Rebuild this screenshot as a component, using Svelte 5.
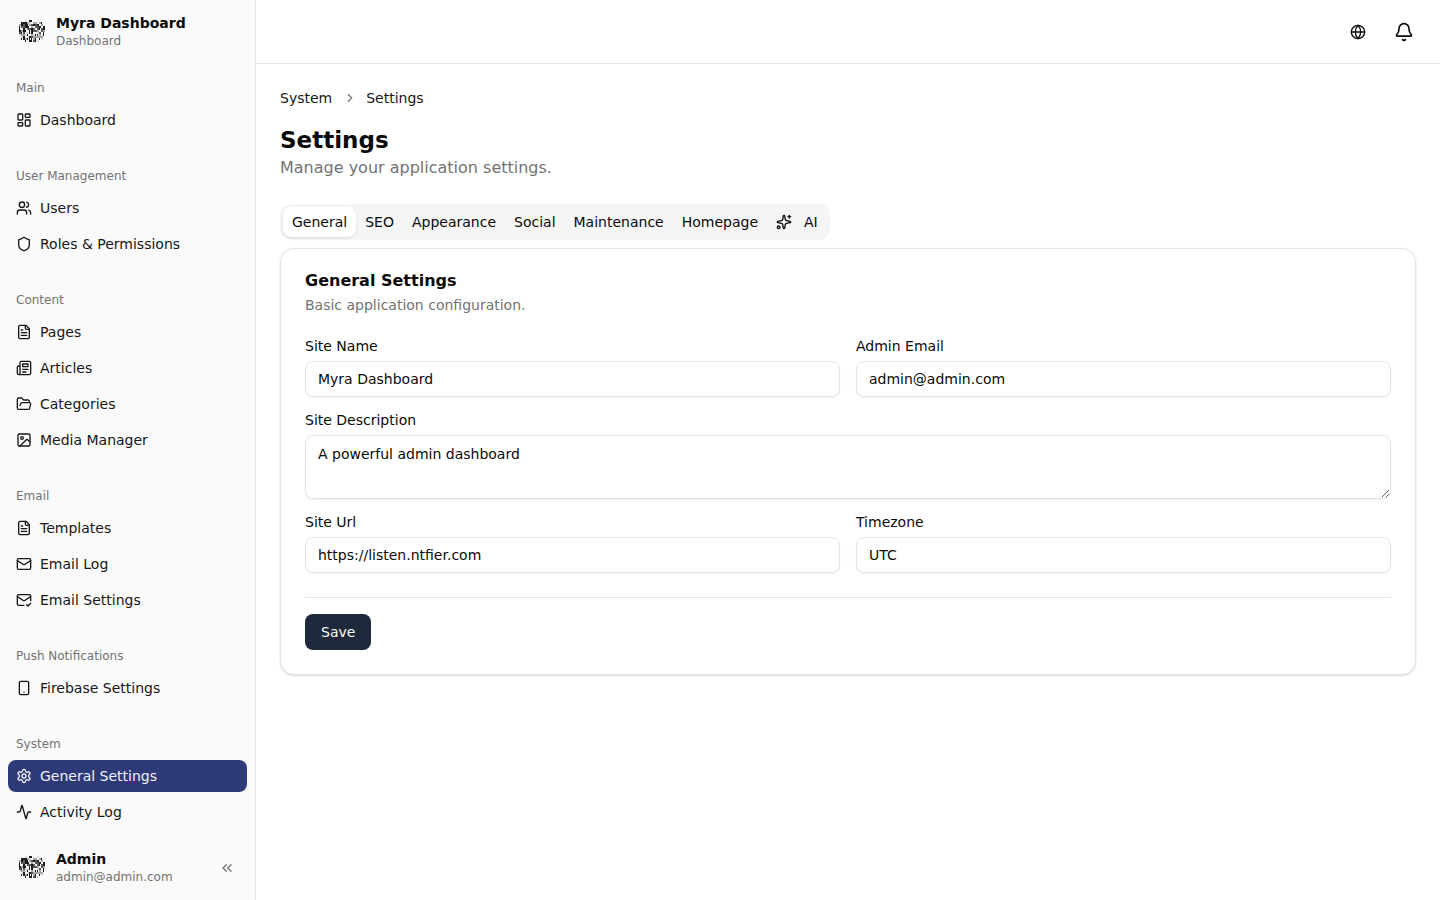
<script>
  const icons = {
    dashboard: '<rect width="7" height="9" x="3" y="3" rx="1"/><rect width="7" height="5" x="14" y="3" rx="1"/><rect width="7" height="9" x="14" y="12" rx="1"/><rect width="7" height="5" x="3" y="16" rx="1"/>',
    users: '<path d="M16 21v-2a4 4 0 0 0-4-4H6a4 4 0 0 0-4 4v2"/><circle cx="9" cy="7" r="4"/><path d="M22 21v-2a4 4 0 0 0-3-3.87"/><path d="M16 3.13a4 4 0 0 1 0 7.75"/>',
    shield: '<path d="M20 13c0 5-3.5 7.5-7.66 8.95a1 1 0 0 1-.67-.01C7.5 20.5 4 18 4 13V6a1 1 0 0 1 1-1c2 0 4.5-1.2 6.24-2.72a1.17 1.17 0 0 1 1.52 0C14.51 3.81 17 5 19 5a1 1 0 0 1 1 1z"/>',
    file: '<path d="M15 2H6a2 2 0 0 0-2 2v16a2 2 0 0 0 2 2h12a2 2 0 0 0 2-2V7Z"/><path d="M14 2v4a2 2 0 0 0 2 2h4"/><path d="M10 9H8"/><path d="M16 13H8"/><path d="M16 17H8"/>',
    news: '<path d="M4 22h16a2 2 0 0 0 2-2V4a2 2 0 0 0-2-2H8a2 2 0 0 0-2 2v16a2 2 0 0 1-2 2Zm0 0a2 2 0 0 1-2-2v-9c0-1.1.9-2 2-2h2"/><path d="M18 14h-8"/><path d="M15 18h-5"/><path d="M10 6h8v4h-8V6Z"/>',
    folder: '<path d="m6 14 1.5-2.9A2 2 0 0 1 9.24 10H20a2 2 0 0 1 1.94 2.5l-1.54 6a2 2 0 0 1-1.95 1.5H4a2 2 0 0 1-2-2V5a2 2 0 0 1 2-2h3.9a2 2 0 0 1 1.69.9l.81 1.2a2 2 0 0 0 1.67.9H18a2 2 0 0 1 2 2v2"/>',
    image: '<rect width="18" height="18" x="3" y="3" rx="2"/><circle cx="9" cy="9" r="2"/><path d="m21 15-3.086-3.086a2 2 0 0 0-2.828 0L6 21"/>',
    mail: '<rect width="20" height="16" x="2" y="4" rx="2"/><path d="m22 7-8.97 5.7a1.94 1.94 0 0 1-2.06 0L2 7"/>',
    mailcheck: '<path d="M22 13V6a2 2 0 0 0-2-2H4a2 2 0 0 0-2 2v12c0 1.1.9 2 2 2h8"/><path d="m22 7-8.97 5.7a1.94 1.94 0 0 1-2.06 0L2 7"/><path d="m16 19 2 2 4-4"/>',
    phone: '<rect width="14" height="20" x="5" y="2" rx="2"/><path d="M12 18h.01"/>',
    gear: '<path d="M12.22 2h-.44a2 2 0 0 0-2 2v.18a2 2 0 0 1-1 1.73l-.43.25a2 2 0 0 1-2 0l-.15-.08a2 2 0 0 0-2.73.73l-.22.38a2 2 0 0 0 .73 2.73l.15.1a2 2 0 0 1 1 1.72v.51a2 2 0 0 1-1 1.74l-.15.09a2 2 0 0 0-.73 2.73l.22.38a2 2 0 0 0 2.73.73l.15-.08a2 2 0 0 1 2 0l.43.25a2 2 0 0 1 1 1.73V20a2 2 0 0 0 2 2h.44a2 2 0 0 0 2-2v-.18a2 2 0 0 1 1-1.73l.43-.25a2 2 0 0 1 2 0l.15.08a2 2 0 0 0 2.73-.73l.22-.39a2 2 0 0 0-.73-2.73l-.15-.08a2 2 0 0 1-1-1.74v-.5a2 2 0 0 1 1-1.74l.15-.09a2 2 0 0 0 .73-2.73l-.22-.38a2 2 0 0 0-2.73-.73l-.15.08a2 2 0 0 1-2 0l-.43-.25a2 2 0 0 1-1-1.73V4a2 2 0 0 0-2-2z"/><circle cx="12" cy="12" r="3"/>',
    activity: '<path d="M22 12h-2.48a2 2 0 0 0-1.93 1.46l-2.35 8.36a.25.25 0 0 1-.48 0L9.24 2.18a.25.25 0 0 0-.48 0l-2.35 8.36A2 2 0 0 1 4.49 12H2"/>',
    chevrons: '<path d="m11 17-5-5 5-5"/><path d="m18 17-5-5 5-5"/>',
    chevron: '<path d="m9 18 6-6-6-6"/>',
    globe: '<circle cx="12" cy="12" r="10"/><path d="M12 2a14.5 14.5 0 0 0 0 20 14.5 14.5 0 0 0 0-20"/><path d="M2 12h20"/>',
    bell: '<path d="M10.268 21a2 2 0 0 0 3.464 0"/><path d="M3.262 15.326A1 1 0 0 0 4 17h16a1 1 0 0 0 .74-1.673C19.41 13.956 18 12.499 18 8A6 6 0 0 0 6 8c0 4.499-1.411 5.956-2.738 7.326"/>',
    sparkles: '<path d="M11.017 2.814a1 1 0 0 1 1.966 0l1.051 5.558a2 2 0 0 0 1.594 1.594l5.558 1.051a1 1 0 0 1 0 1.966l-5.558 1.051a2 2 0 0 0-1.594 1.594l-1.051 5.558a1 1 0 0 1-1.966 0l-1.051-5.558a2 2 0 0 0-1.594-1.594l-5.558-1.051a1 1 0 0 1 0-1.966l5.558-1.051a2 2 0 0 0 1.594-1.594z"/><path d="M20 2v4"/><path d="M22 4h-4"/><circle cx="4" cy="20" r="2"/>'
  };

  const groups = [
    { label: 'Main', items: [['Dashboard', 'dashboard']] },
    { label: 'User Management', items: [['Users', 'users'], ['Roles & Permissions', 'shield']] },
    { label: 'Content', items: [['Pages', 'file'], ['Articles', 'news'], ['Categories', 'folder'], ['Media Manager', 'image']] },
    { label: 'Email', items: [['Templates', 'file'], ['Email Log', 'mail'], ['Email Settings', 'mailcheck']] },
    { label: 'Push Notifications', items: [['Firebase Settings', 'phone']] },
    { label: 'System', items: [['General Settings', 'gear'], ['Activity Log', 'activity']] }
  ];

  const tabs = ['General', 'SEO', 'Appearance', 'Social', 'Maintenance', 'Homepage'];

  // speckled cube logo: chunky deterministic noise inside a chamfered block outline
  const cells = [];
  let seed = 11;
  for (let y = 4; y < 26; y += 2) {
    for (let x = 3; x < 29; x += 2) {
      const dy = Math.abs(y - 14);
      const inset = dy >= 10 ? 6 : dy >= 8 ? 2 : 0;
      if (x < 3 + inset || x > 27 - inset) continue;
      seed = (seed * 16807) % 2147483647;
      const r = (seed % 100) / 100;
      const shade = r < 0.36 ? '#1c1c1c' : r < 0.52 ? '#5a5a5a' : r < 0.72 ? '#a6a6a6' : r < 0.86 ? '#dcdcdc' : null;
      if (shade) cells.push({ x, y, shade, w: r < 0.2 ? 1 : 2 });
    }
  }
</script>

{#snippet icon(name, size = 16)}
  <svg class="icon" width={size} height={size} viewBox="0 0 24 24" fill="none" stroke="currentColor" stroke-width="2" stroke-linecap="round" stroke-linejoin="round">{@html icons[name]}</svg>
{/snippet}

{#snippet logo()}
  <svg class="logo" width="32" height="32" viewBox="0 0 32 32">
    {#each cells as c}
      <rect x={c.x} y={c.y} width={c.w} height="2" fill={c.shade} />
    {/each}
  </svg>
{/snippet}

<div class="app">
  <aside class="sidebar">
    <div class="brand">
      {@render logo()}
      <div class="who">
        <strong>Myra Dashboard</strong>
        <span>Dashboard</span>
      </div>
    </div>
    <nav class="groups">
      {#each groups as g}
        <section class="group">
          <div class="group-label">{g.label}</div>
          <ul>
            {#each g.items as [name, ic]}
              <li class:active={name === 'General Settings'}>
                {@render icon(ic)}
                <span>{name}</span>
              </li>
            {/each}
          </ul>
        </section>
      {/each}
    </nav>
    <div class="foot">
      {@render logo()}
      <div class="who">
        <strong>Admin</strong>
        <span>admin@admin.com</span>
      </div>
      <span class="collapse">{@render icon('chevrons')}</span>
    </div>
  </aside>

  <div class="main">
    <header class="topbar">
      <span class="top-icon">{@render icon('globe')}</span>
      <span class="top-icon">{@render icon('bell', 20)}</span>
    </header>
    <main class="content">
      <div class="crumbs">
        <span>System</span>
        <span class="sep">{@render icon('chevron', 14)}</span>
        <span>Settings</span>
      </div>
      <h1>Settings</h1>
      <p class="lead">Manage your application settings.</p>

      <div class="tabs">
        {#each tabs as t, i}
          <div class="tab" class:on={i === 0}>{t}</div>
        {/each}
        <div class="tab ai">{@render icon('sparkles')}<span>AI</span></div>
      </div>

      <section class="card">
        <h2>General Settings</h2>
        <p class="desc">Basic application configuration.</p>
        <div class="form">
          <label class="field"><span>Site Name</span><input value="Myra Dashboard" /></label>
          <label class="field"><span>Admin Email</span><input value="admin@admin.com" /></label>
          <label class="field wide"><span>Site Description</span><textarea>A powerful admin dashboard</textarea></label>
          <label class="field"><span>Site Url</span><input value="https://listen.ntfier.com" /></label>
          <label class="field"><span>Timezone</span><input value="UTC" /></label>
        </div>
        <hr />
        <button type="button">Save</button>
      </section>
    </main>
  </div>
</div>

<style>
  :global(body) {
    margin: 0;
    background: #fff;
    font-family: "DejaVu Sans", sans-serif;
    color: #0a0a0a;
  }
  .app {
    display: flex;
    height: 900px;
    overflow: hidden;
  }
  .sidebar {
    width: 255px;
    flex: none;
    background: #fafafa;
    border-right: 1px solid #e5e5e5;
    display: flex;
    flex-direction: column;
  }
  .brand, .foot {
    display: flex;
    align-items: center;
    gap: 8px;
    height: 48px;
    padding: 0 8px;
    margin: 8px;
  }
  .logo { flex: none; }
  .who {
    display: flex;
    flex-direction: column;
    min-width: 0;
    flex: 1;
    padding-bottom: 2px;
  }
  .who strong {
    font-size: 14px;
    line-height: 20px;
    font-weight: 600;
  }
  .who span {
    font-size: 12px;
    line-height: 16px;
    color: #737373;
  }
  .groups {
    flex: 1;
    display: flex;
    flex-direction: column;
    gap: 8px;
  }
  .group { padding: 8px; }
  .group-label {
    height: 32px;
    line-height: 32px;
    padding: 0 8px;
    font-size: 12px;
    color: #737373;
  }
  ul {
    list-style: none;
    margin: 0;
    padding: 0;
    display: flex;
    flex-direction: column;
    gap: 4px;
  }
  li {
    display: flex;
    align-items: center;
    gap: 8px;
    height: 32px;
    padding: 0 8px;
    border-radius: 8px;
    font-size: 14px;
    color: #171717;
  }
  li.active {
    background: #2d3a77;
    color: #f0f0f5;
  }
  .icon { flex: none; display: block; }
  .collapse {
    color: #737373;
    margin-right: 4px;
  }
  .main {
    flex: 1;
    min-width: 0;
  }
  .topbar {
    height: 63px;
    border-bottom: 1px solid #e5e5e5;
    display: flex;
    align-items: center;
    justify-content: flex-end;
    gap: 28px;
    padding-right: 26px;
  }
  .top-icon { color: #0a0a0a; }
  .content { padding: 24px 24px 0; }
  .crumbs {
    display: flex;
    align-items: center;
    gap: 10px;
    font-size: 14px;
    line-height: 20px;
    color: #171717;
  }
  .sep {
    color: #737373;
    margin-left: 1px;
    margin-right: -1px;
  }
  h1 {
    margin: 16px 0 0;
    font-size: 23px;
    line-height: 32px;
    font-weight: 700;
    color: #0a0a0a;
  }
  .lead {
    margin: 0;
    font-size: 16px;
    line-height: 24px;
    color: #737373;
  }
  .tabs {
    display: flex;
    align-items: center;
    width: fit-content;
    height: 36px;
    padding: 3px;
    box-sizing: border-box;
    margin-top: 24px;
    background: #f5f5f5;
    border-radius: 10px;
  }
  .tab {
    height: 30px;
    display: flex;
    align-items: center;
    padding: 0 9px;
    font-size: 14px;
    border-radius: 8px;
    color: #0a0a0a;
  }
  .tab.on {
    background: #fff;
    box-shadow: 0 1px 3px rgba(0, 0, 0, 0.1), 0 1px 2px -1px rgba(0, 0, 0, 0.1);
  }
  .tab.ai { gap: 12px; }
  .card {
    margin-top: 8px;
    background: #fff;
    border: 1px solid #e5e5e5;
    border-radius: 14px;
    padding: 24px;
    box-shadow: 0 1px 3px rgba(0, 0, 0, 0.1), 0 1px 2px -1px rgba(0, 0, 0, 0.1);
  }
  h2 {
    margin: 0;
    font-size: 16px;
    line-height: 16px;
    font-weight: 700;
  }
  .desc {
    margin: 6px 0 0;
    font-size: 14px;
    line-height: 20px;
    color: #737373;
  }
  .form {
    margin-top: 24px;
    display: grid;
    grid-template-columns: 1fr 1fr;
    gap: 16px;
  }
  .field {
    display: flex;
    flex-direction: column;
    gap: 8px;
    min-width: 0;
  }
  .field span {
    font-size: 14px;
    line-height: 14px;
    font-weight: 500;
    color: #0a0a0a;
  }
  .wide { grid-column: 1 / -1; }
  input, textarea {
    font: inherit;
    font-size: 14px;
    color: #0a0a0a;
    background: #fff;
    border: 1px solid #e5e5e5;
    border-radius: 8px;
    padding: 0 12px;
    box-sizing: border-box;
    width: 100%;
    box-shadow: 0 1px 2px rgba(0, 0, 0, 0.05);
    outline: none;
  }
  input { height: 36px; }
  textarea {
    display: block;
    height: 64px;
    padding: 8px 12px;
    line-height: 20px;
  }
  hr {
    border: 0;
    border-top: 1px solid #e5e5e5;
    margin: 24px 0 16px;
  }
  button {
    display: block;
    height: 36px;
    padding: 0 16px;
    border: 0;
    border-radius: 8px;
    background: #1e293b;
    color: #f8fafc;
    font: inherit;
    font-size: 14px;
  }
</style>
